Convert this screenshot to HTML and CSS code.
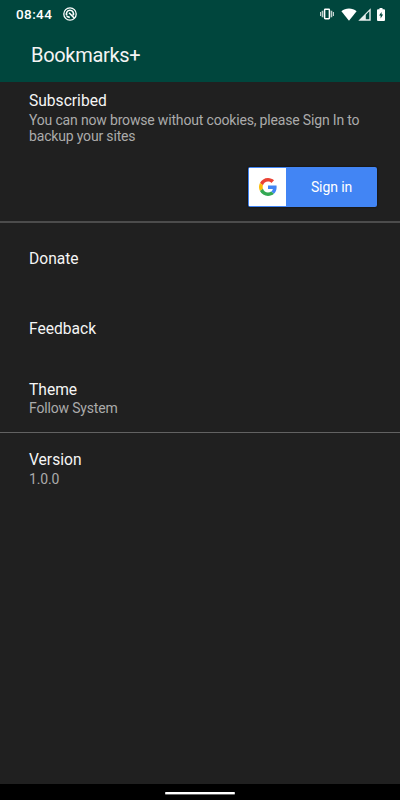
FILE: index.html
```html
<!DOCTYPE html>
<html lang="en">
<head>
<meta charset="utf-8">
<title>Bookmarks+</title>
<link rel="stylesheet" href="styles.css">
</head>
<body>
<div class="screen">
  <div class="statusbar">
    <span class="clock">08:44</span>
    <svg class="notice" width="14" height="14" viewBox="0 0 14 14" fill="none" stroke="#fff">
      <circle cx="7" cy="7" r="6.2" stroke-width="1.3"/>
      <path d="M3.8 8.3A3.5 3.5 0 1 1 10.1 8.3M6 5.8l5.2 5.2M3.6 9.2l3.2 1.3" stroke-width="1.6"/>
    </svg>
    <div class="system">
      <svg width="14" height="12" viewBox="0 0 14 12" fill="none" stroke="#fff">
        <rect x="4.6" y="1.3" width="4.8" height="9.4" rx=".6" stroke-width="1.5"/>
        <path d="M2.5 2.7v6.6M11.5 2.7v6.6" stroke-width="1.6" opacity=".75"/>
        <path d="M.6 4v4M13.4 4v4" stroke-width="1" opacity=".85"/>
      </svg>
      <svg class="wifi" width="16" height="13" viewBox="0 0 16 13"><path d="M8 12.8.4 3.2C4.5-.4 11.5-.4 15.6 3.2z" fill="#fff"/></svg>
      <svg class="cell" width="13" height="13" viewBox="0 0 13 13"><path d="M.3 12.7 12.7.3v12.4zM7.8 6.7v4.6h3.5V3.3z" fill="#fff" fill-rule="evenodd" opacity=".9"/></svg>
      <svg class="battery" width="8" height="13" viewBox="0 0 8 13"><path d="M2.5 0h3v1.2H7q1 0 1 1V12q0 1-1 1H1q-1 0-1-1V2.2q0-1 1-1h1.5z" fill="#fff"/><path d="M4.6 4 2 7.6h1.6v2.9l2.5-3.9H4.6z" fill="#00463d"/></svg>
    </div>
  </div>
  <header class="appbar"><h1>Bookmarks+</h1></header>
  <main>
    <section class="account">
      <h2>Subscribed</h2>
      <p>You can now browse without cookies, please Sign In to backup your sites</p>
      <button class="signin">
        <span class="logo">
          <svg width="18" height="18" viewBox="0 0 48 48">
            <path fill="#ea4335" d="M24 9.5c3.54 0 6.71 1.22 9.21 3.6l6.85-6.85C35.9 2.38 30.47 0 24 0 14.62 0 6.51 5.38 2.56 13.22l7.98 6.19C12.43 13.72 17.74 9.5 24 9.5z"/>
            <path fill="#4285f4" d="M46.98 24.55c0-1.57-.15-3.09-.38-4.55H24v9.02h12.94c-.58 2.96-2.26 5.48-4.78 7.18l7.73 6c4.51-4.18 7.09-10.36 7.09-17.65z"/>
            <path fill="#fbbc05" d="M10.53 28.59c-.48-1.45-.76-2.99-.76-4.59s.27-3.14.76-4.59l-7.98-6.19C.92 16.46 0 20.12 0 24c0 3.88.92 7.54 2.56 10.78z"/>
            <path fill="#34a853" d="M24 48c6.48 0 11.93-2.13 15.89-5.81l-7.73-6c-2.15 1.45-4.92 2.3-8.16 2.3-6.26 0-11.57-4.22-13.47-9.91l-7.98 6.19C6.51 42.62 14.62 48 24 48z"/>
          </svg>
        </span>
        <span class="label">Sign in</span>
      </button>
    </section>
    <section class="options">
      <div class="row single"><h2>Donate</h2></div>
      <div class="row single"><h2>Feedback</h2></div>
      <div class="row theme"><h2>Theme</h2><p>Follow System</p></div>
    </section>
    <section class="row version"><h2>Version</h2><p>1.0.0</p></section>
  </main>
  <footer class="navbar"><div class="handle"></div></footer>
</div>
</body>
</html>
```
FILE: styles.css
```css
* { box-sizing: border-box; }
body { margin: 0; background: #202020; font-family: Roboto, sans-serif; }
.screen { width: 400px; height: 800px; display: flex; flex-direction: column; }
h1, h2, p { margin: 0; font-weight: 400; }
.statusbar { height: 28px; padding: 0 15px 0 16px; display: flex; align-items: center; background: #00463d; color: #fff; }
.clock { width: 47px; font-size: 13.5px; font-weight: 500; letter-spacing: .4px; }
.system { margin-left: auto; display: flex; align-items: center; }
.wifi { margin-left: 7px; }
.cell { margin-left: 1px; }
.battery { margin-left: 6px; }
.appbar { height: 54px; padding: 0 31px; background: #00463d; color: #f4f4f4; display: flex; align-items: center; }
h1 { font-size: 20px; line-height: 24px; letter-spacing: -.3px; }
main { flex: 1; }
h2 { font-size: 15.6px; line-height: 20px; color: #f5f5f5; }
p { font-size: 14px; line-height: 16px; letter-spacing: -.17px; color: #ababab; }
.account { height: 141px; padding: 9px 23px 14px 29px; display: flex; flex-direction: column; border-bottom: 2px solid #4c4c4c; }
.account p, .version p { margin-top: 1px; }
.signin { width: 129px; height: 40px; margin-top: auto; align-self: flex-end; padding: 1px; display: flex; border: 0; border-radius: 2px; background: #4285f4; box-shadow: 0 0 2px #080808; }
.logo { width: 37px; height: 38px; background: #fff; display: flex; align-items: center; justify-content: center; }
.label { flex: 1; align-self: center; padding-left: 1px; text-align: center; color: #fff; font: 14px/18px Roboto, sans-serif; letter-spacing: -.1px; }
.options { height: 210px; border-bottom: 1px solid #626262; }
.row { padding: 0 29px; }
.single { height: 70px; padding-top: 2px; display: flex; align-items: center; }
.theme { padding-top: 17px; }
.version { padding-top: 17px; }
.navbar { height: 16px; background: #000; padding-top: 8px; }
.handle { width: 70px; height: 2px; margin: 0 auto; background: #fff; border-radius: 1px; box-shadow: 0 1px #666; }
```
